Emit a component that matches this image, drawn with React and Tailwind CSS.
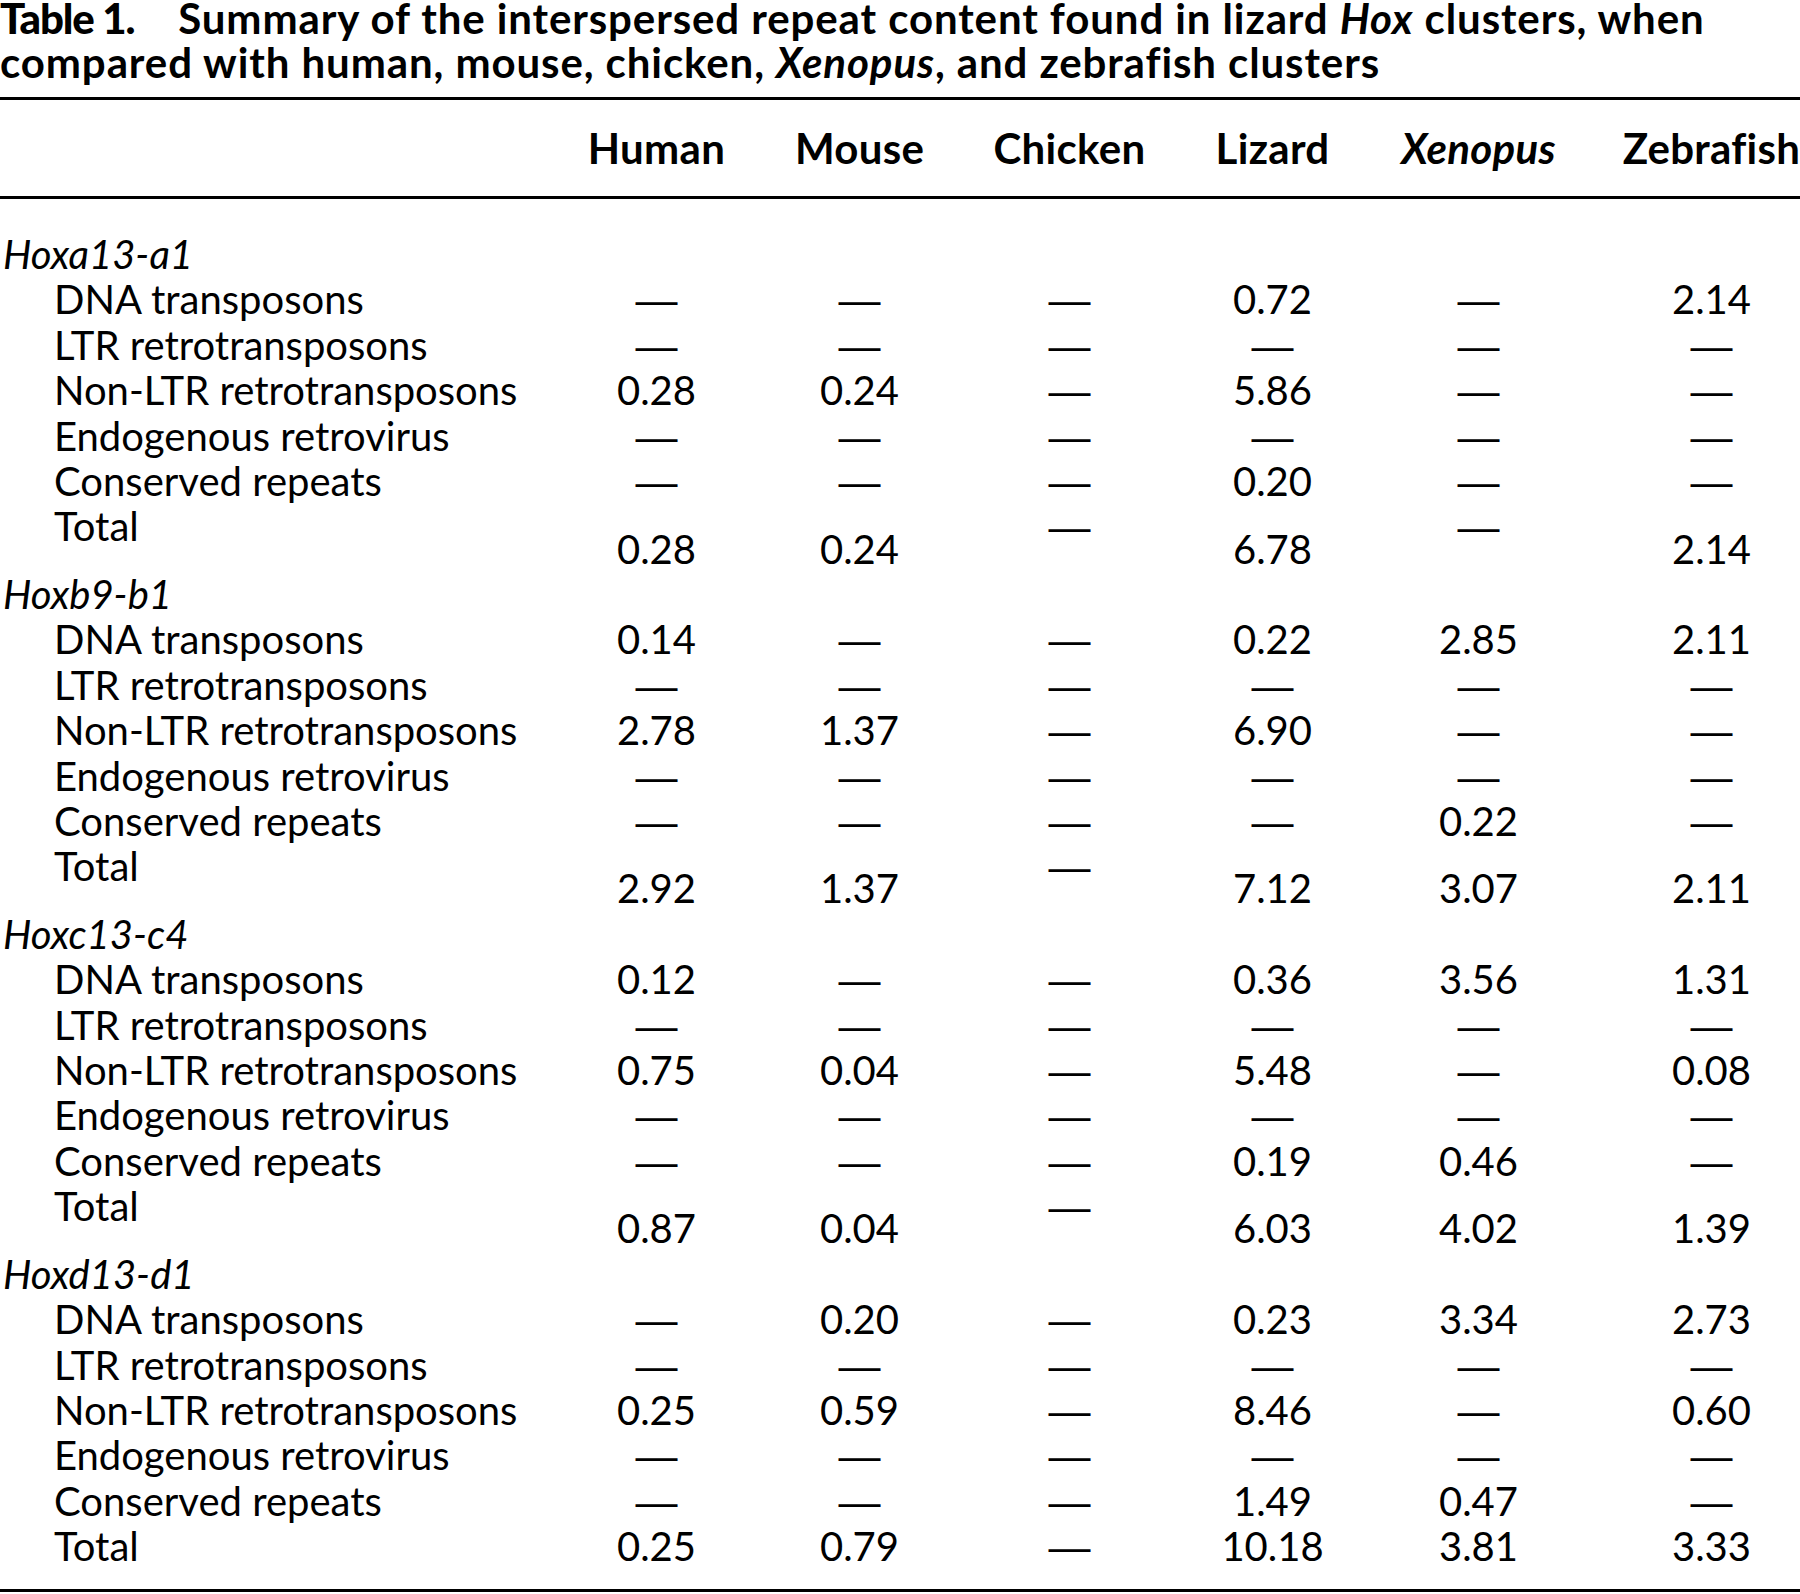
const D = "—";

const groups = [
  {
    name: "Hoxa13-a1",
    rows: [
      ["DNA transposons", D, D, D, "0.72", D, "2.14"],
      ["LTR retrotransposons", D, D, D, D, D, D],
      ["Non-LTR retrotransposons", "0.28", "0.24", D, "5.86", D, D],
      ["Endogenous retrovirus", D, D, D, D, D, D],
      ["Conserved repeats", D, D, D, "0.20", D, D],
    ],
    total: ["0.28", "0.24", D, "6.78", D, "2.14"],
    split: true,
  },
  {
    name: "Hoxb9-b1",
    rows: [
      ["DNA transposons", "0.14", D, D, "0.22", "2.85", "2.11"],
      ["LTR retrotransposons", D, D, D, D, D, D],
      ["Non-LTR retrotransposons", "2.78", "1.37", D, "6.90", D, D],
      ["Endogenous retrovirus", D, D, D, D, D, D],
      ["Conserved repeats", D, D, D, D, "0.22", D],
    ],
    total: ["2.92", "1.37", D, "7.12", "3.07", "2.11"],
    split: true,
  },
  {
    name: "Hoxc13-c4",
    rows: [
      ["DNA transposons", "0.12", D, D, "0.36", "3.56", "1.31"],
      ["LTR retrotransposons", D, D, D, D, D, D],
      ["Non-LTR retrotransposons", "0.75", "0.04", D, "5.48", D, "0.08"],
      ["Endogenous retrovirus", D, D, D, D, D, D],
      ["Conserved repeats", D, D, D, "0.19", "0.46", D],
    ],
    total: ["0.87", "0.04", D, "6.03", "4.02", "1.39"],
    split: true,
  },
  {
    name: "Hoxd13-d1",
    rows: [
      ["DNA transposons", D, "0.20", D, "0.23", "3.34", "2.73"],
      ["LTR retrotransposons", D, D, D, D, D, D],
      ["Non-LTR retrotransposons", "0.25", "0.59", D, "8.46", D, "0.60"],
      ["Endogenous retrovirus", D, D, D, D, D, D],
      ["Conserved repeats", D, D, D, "1.49", "0.47", D],
    ],
    total: ["0.25", "0.79", D, "10.18", "3.81", "3.33"],
    split: false,
  },
];

const cols = "grid grid-cols-[555px_203px_203px_217px_189px_223px_243px]";

// dashes: Liberation Sans em dash is a full em wide, like the original
function Cell({ v, className = "" }) {
  return (
    <div className={`text-center ${className}`}>
      {v === D ? (
        <span className="font-['Liberation_Sans',sans-serif] text-[42px]">
          {D}
        </span>
      ) : (
        v
      )}
    </div>
  );
}

function Row({ label, values }) {
  return (
    <div className={`${cols} h-[45.4px] items-center leading-[45.4px]`}>
      <div className="pl-[54px] whitespace-nowrap">{label}</div>
      {values.map((v, i) => (
        <Cell key={i} v={v} />
      ))}
    </div>
  );
}

function TotalRow({ values, split }) {
  if (!split) return <Row label="Total" values={values} />;
  return (
    <div className={`${cols} h-[67.6px] leading-[45.4px]`}>
      <div className="pl-[54px] self-start">Total</div>
      {values.map((v, i) => (
        <Cell key={i} v={v} className={v === D ? "self-start" : "self-end"} />
      ))}
    </div>
  );
}

export default function App() {
  return (
    <div className="w-[1800px] h-[1594px] overflow-hidden bg-white text-black font-['Lato',sans-serif]">
      {/* Caption */}
      <div className="text-[42px] font-bold tracking-[0.9px] whitespace-nowrap">
        <div className="h-[40px] leading-[36px]">
          <span className="font-black tracking-[-1.2px]">Table 1.</span>
          <span className="ml-[44px]">
            Summary of the interspersed repeat content found in lizard{" "}
            <i>Hox</i> clusters, when
          </span>
        </div>
        <div className="h-[44px] leading-[44px]">
          compared with human, mouse, chicken, <i>Xenopus</i>, and zebrafish
          clusters
        </div>
      </div>

      {/* Table */}
      <div className="mt-[13px] border-t-[3px] border-black" />
      <div
        className={`${cols} h-[96px] items-center text-[42px] tracking-[0.3px] font-bold`}
      >
        <div />
        <div className="text-center">Human</div>
        <div className="text-center">Mouse</div>
        <div className="text-center">Chicken</div>
        <div className="text-center">Lizard</div>
        <div className="text-center italic">Xenopus</div>
        <div className="text-center">Zebrafish</div>
      </div>
      <div className="border-t-[3px] border-black" />

      <div className="pt-[33px] pb-[19px] text-[40px]">
        {groups.map((g) => (
          <div key={g.name}>
            <div className="h-[45.4px] leading-[45.4px] pl-[3px] italic">
              {g.name}
            </div>
            {g.rows.map((r) => (
              <Row key={r[0]} label={r[0]} values={r.slice(1)} />
            ))}
            <TotalRow values={g.total} split={g.split} />
          </div>
        ))}
      </div>
      <div className="border-t-[3px] border-black" />
    </div>
  );
}
